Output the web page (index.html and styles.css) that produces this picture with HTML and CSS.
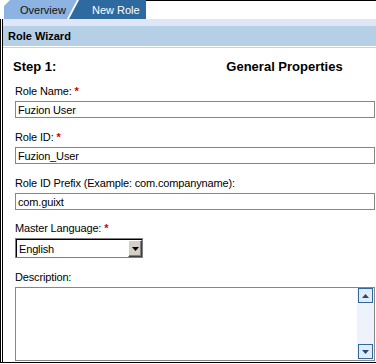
FILE: index.html
```html
<!DOCTYPE html>
<html>
<head>
<meta charset="utf-8">
<link rel="stylesheet" href="styles.css">
</head>
<body>
<div class="tabs">
  <div class="tab tab-overview">Overview</div>
  <div class="tab tab-active">New Role</div>
  <div class="tab-fill"></div>
</div>
<div class="frame">
  <div class="strip"></div>
  <div class="band">Role Wizard</div>
  <div class="gap"></div>
  <div class="rule"></div>
  <div class="content">
    <div class="step"><span class="step-num">Step 1:</span><span class="step-title">General Properties</span></div>
    <div class="field f1">
      <label class="lbl">Role Name: <span class="req">*</span></label>
      <input class="txt" type="text" value="Fuzion User">
    </div>
    <div class="field">
      <label class="lbl">Role ID: <span class="req">*</span></label>
      <input class="txt" type="text" value="Fuzion_User">
    </div>
    <div class="field">
      <label class="lbl">Role ID Prefix (Example: com.companyname):</label>
      <input class="txt" type="text" value="com.guixt">
    </div>
    <div class="field f4">
      <label class="lbl">Master Language: <span class="req">*</span></label>
      <div class="select">
        <div class="select-inner">
          <select class="sel"><option>English</option></select>
          <span class="dd-btn"><svg width="7" height="4" viewBox="0 0 7 4"><path d="M0 0H7L3.5 4Z" fill="#000"/></svg></span>
        </div>
      </div>
    </div>
    <div class="field">
      <label class="lbl">Description:</label>
      <div class="ta">
        <textarea class="ta-input"></textarea>
        <div class="sb">
          <span class="sb-btn"><svg width="7" height="4" viewBox="0 0 7 4"><path d="M0 4H7L3.5 0Z" fill="#1d4d80"/></svg></span>
          <span class="sb-btn"><svg width="7" height="4" viewBox="0 0 7 4"><path d="M0 0H7L3.5 4Z" fill="#1d4d80"/></svg></span>
        </div>
      </div>
    </div>
  </div>
</div>
</body>
</html>
```
FILE: styles.css
```css
html, body {
  margin: 0;
  padding: 0;
  background: #fff;
}
body {
  width: 376px;
  height: 364px;
  overflow: hidden;
  font-family: "Liberation Sans", Arial, sans-serif;
  font-size: 11px;
  color: #000;
}
.tabs {
  display: flex;
  height: 19px;
}
.tab {
  height: 19px;
  box-sizing: border-box;
  padding-top: 1px;
  line-height: 18px;
  font-size: 11px;
  white-space: nowrap;
}
.tab-overview {
  margin-left: 4px;
  width: 75px;
  padding-left: 16px;
  background: #8db3e2;
  color: #111;
  clip-path: polygon(0 6px, 6px 0, calc(100% - 2px) 0, calc(100% - 12px) 100%, 0 100%);
}
.tab-active {
  margin-left: -10px;
  width: 77px;
  padding-left: 23px;
  background: #2e6a9f;
  color: #fff;
  clip-path: polygon(10px 0, 100% 0, 100% 100%, 0 100%);
}
.tab-fill {
  flex: 1;
  border-top: 1px solid #000;
}
.frame {
  height: 344px;
  box-sizing: border-box;
  border-left: 3px double #000;
  border-bottom: 1px solid #000;
  display: flex;
  flex-direction: column;
}
.strip {
  height: 7px;
  background: #dfe7f7;
}
.band {
  height: 20px;
  line-height: 20px;
  background: #b4cfe6;
  font-weight: bold;
  font-size: 11px;
  padding-left: 5px;
}
.gap {
  height: 1px;
}
.rule {
  height: 1px;
  background: #bfd3e8;
}
.content {
  padding: 11px 1px 0 10px;
}
.step {
  display: grid;
  grid-template-columns: 1fr 1fr;
  font-size: 13px;
  font-weight: bold;
  line-height: 16px;
}
.step-title {
  text-align: center;
}
.field {
  margin-top: 13px;
  padding-left: 2px;
  display: flex;
  flex-direction: column;
}
.f1 {
  margin-top: 10px;
}
.f4 {
  margin-top: 12px;
}
.lbl {
  display: block;
  line-height: 13px;
  letter-spacing: -0.15px;
  margin-bottom: 3px;
}
.req {
  color: #d00000;
  font-weight: bold;
}
.txt {
  display: block;
  box-sizing: border-box;
  width: 360px;
  height: 17px;
  margin: 0;
  padding: 0 2px;
  border: 1px solid #868686;
  font-family: "Liberation Sans", Arial, sans-serif;
  font-size: 11px;
  letter-spacing: -0.15px;
  color: #000;
  background: #fff;
  outline: none;
}
.select {
  width: 128px;
  height: 20px;
  box-sizing: border-box;
  border: 1px solid #808080;
}
.select-inner {
  display: flex;
  height: 100%;
  box-sizing: border-box;
  border-top: 1px solid #000;
  border-left: 1px solid #000;
}
.sel {
  flex: 1;
  min-width: 0;
  height: 100%;
  margin: 0;
  padding: 0 0 0 2px;
  border: none;
  background: transparent;
  -webkit-appearance: none;
  appearance: none;
  font-family: "Liberation Sans", Arial, sans-serif;
  font-size: 11px;
  letter-spacing: -0.15px;
  color: #000;
  outline: none;
}
.dd-btn {
  width: 14px;
  box-sizing: border-box;
  background: #d4d0c8;
  border: 1px solid;
  border-color: #fff #404040 #404040 #fff;
  box-shadow: inset -1px -1px 0 #808080;
  display: flex;
  align-items: center;
  justify-content: center;
}
.ta {
  width: 360px;
  height: 74px;
  box-sizing: border-box;
  border: 1px solid #868686;
  display: flex;
}
.ta-input {
  flex: 1;
  margin: 0;
  padding: 2px;
  border: none;
  resize: none;
  overflow: hidden;
  outline: none;
  font-family: "Liberation Sans", Arial, sans-serif;
  font-size: 11px;
}
.sb {
  width: 17px;
  box-sizing: border-box;
  padding: 0 1px 1px;
  background: #edf2fb;
  display: flex;
  flex-direction: column;
  justify-content: space-between;
}
.sb-btn {
  width: 15px;
  height: 15px;
  box-sizing: border-box;
  border: 1px solid #2d69a3;
  background: #e3ebf7;
  display: flex;
  align-items: center;
  justify-content: center;
}
```
